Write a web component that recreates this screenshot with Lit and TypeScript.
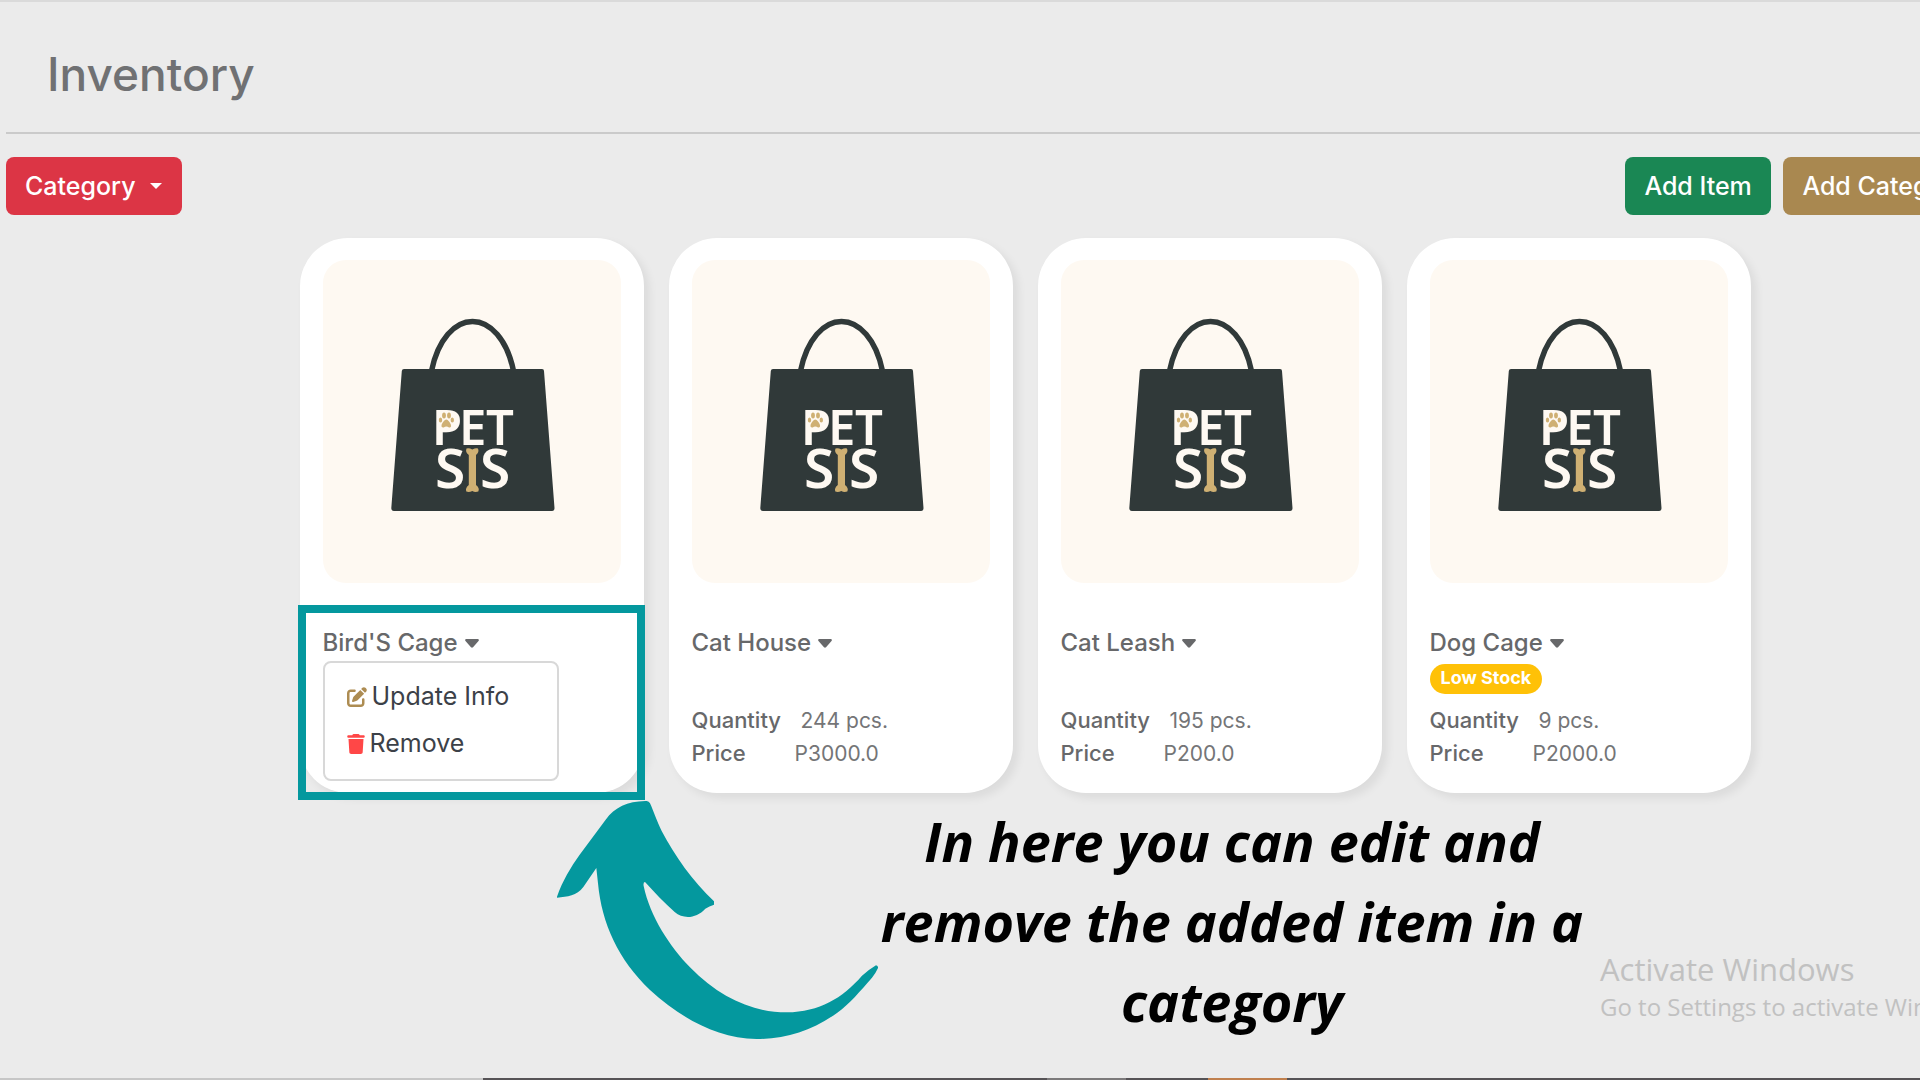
import { LitElement, html, css, nothing } from "lit";
import { customElement, property } from "lit/decorators.js";

interface Item {
  name: string;
  quantity?: string;
  price?: string;
  low?: boolean;
  open?: boolean;
}

const ITEMS: Item[] = [
  { name: "Bird'S Cage", open: true },
  { name: "Cat House", quantity: "244 pcs.", price: "P3000.0" },
  { name: "Cat Leash", quantity: "195 pcs.", price: "P200.0" },
  { name: "Dog Cage", quantity: "9 pcs.", price: "P2000.0", low: true },
];

const bag = html`
  <svg class="bag" viewBox="0 0 298 323" role="img" aria-label="Pet SIS">
    <path d="M108.500 111C115 79 132 61.500 149.500 61.500S184 79 190.500 111" fill="none" stroke="#303939" stroke-width="5.500" />
    <path d="M81 109H219Q221 109 221 111L231.500 248Q231.500 251 229 251H71Q68.300 251 68.300 248L78.800 111Q79 109 81 109Z" fill="#303939" />
    <path d="M116 153H127Q133 154 133 161T127 169H116Z" fill="#fef9f2" />
    <g fill="#fef9f2" class="brand">
      <text x="109" y="185" font-size="49">P</text>
      <text x="136" y="185" font-size="49">E</text>
      <text x="163" y="185" font-size="49">T</text>
      <text x="112" y="228" font-size="55">S</text>
      <text x="157" y="228" font-size="55">S</text>
    </g>
    <g fill="#cfb073">
      <path d="M143.500 188.500Q146 187.500 149.300 189.500Q153 187.500 155 188.500Q156.500 192 153 195V225Q157 228 155.300 231.500Q152 232.500 149.300 231Q146 232.500 143.300 231.500Q142 228 145.800 225V195Q142 192 143.500 188.500Z" />
      <ellipse cx="121" cy="155.500" rx="1.900" ry="3" />
      <ellipse cx="126" cy="155.500" rx="1.900" ry="3" />
      <ellipse cx="117.500" cy="160" rx="1.700" ry="2.500" />
      <ellipse cx="129.300" cy="160" rx="1.700" ry="2.500" />
      <path d="M123.300 159.500Q126 160 128 165Q128.500 168 126 167.500Q123.300 165.500 120.700 167.500Q118 168 118.500 165Q120.500 160 123.300 159.500Z" />
    </g>
  </svg>
`;

@customElement("item-card")
class ItemCard extends LitElement {
  @property({ attribute: false }) item!: Item;

  static styles = css`
    :host {
      display: block;
      position: relative;
      box-sizing: border-box;
      padding: 22px 23px 23px;
      border-radius: 48px;
      background: #fff;
      box-shadow: 5px 5px 10px rgba(0, 0, 0, 0.07);
    }
    .picture {
      display: block;
      border-radius: 23px;
      background: #fef9f2;
      overflow: hidden;
    }
    .bag {
      display: block;
      width: 100%;
    }
    .brand {
      font-family: "Noto Sans", sans-serif;
      font-weight: 600;
    }
    .name {
      display: flex;
      align-items: center;
      gap: 7px;
      margin: 42px 0 0;
      padding: 0;
      border: 0;
      background: none;
      color: #67686a;
      font: 500 24px/36px Inter, sans-serif;
    }
    .caret {
      width: 14px;
      height: 9px;
    }
    .status {
      height: 43px;
      padding-top: 3px;
      box-sizing: border-box;
    }
    .badge {
      display: inline-block;
      height: 30px;
      padding: 0 11px;
      border-radius: 15px;
      background: #ffc107;
      color: #fff;
      font: 700 18px/28px Inter, sans-serif;
    }
    .facts {
      margin: 0;
      font: 400 21px/33px Inter, sans-serif;
      color: #747577;
    }
    .fact {
      display: flex;
    }
    dt {
      width: 103px;
      color: #67686a;
      font-size: 22px;
      font-weight: 500;
    }
    dd {
      margin: 0;
    }
    .wide dt {
      width: 109px;
    }
    .menu {
      position: absolute;
      left: 23px;
      top: 423px;
      box-sizing: border-box;
      width: 236px;
      margin: 0;
      padding: 10px 22px 12px;
      border: 2px solid #d8d8d8;
      border-radius: 8px;
      background: #fff;
      list-style: none;
    }
    .action {
      display: flex;
      align-items: center;
      gap: 5px;
      padding: 0;
      border: 0;
      background: none;
      color: #3c4148;
      white-space: nowrap;
      font: 400 25px/47px Inter, sans-serif;
    }
    .edit {
      width: 20px;
      height: 20px;
    }
    .trash {
      width: 18px;
      height: 20px;
    }
    .highlight {
      position: absolute;
      left: -2px;
      top: 367px;
      box-sizing: border-box;
      width: 347px;
      height: 195px;
      border: 8px solid #04989e;
      pointer-events: none;
    }
  `;

  render() {
    const it = this.item;
    return html`
      <div class="picture">${bag}</div>
      <button class="name" aria-expanded=${it.open ? "true" : "false"}>
        ${it.name}
        <svg class="caret" viewBox="0 0 14 9"><path d="M1 0H13Q14.500 .5 13.500 2L8 8.300Q7 9 6 8.300L.5 2Q-.5 .5 1 0Z" fill="#67686a" /></svg>
      </button>
      <div class="status">${it.low ? html`<span class="badge">Low Stock</span>` : nothing}</div>
      ${it.quantity
        ? html`<dl class="facts">
            <div class="fact wide"><dt>Quantity</dt><dd>${it.quantity}</dd></div>
            <div class="fact"><dt>Price</dt><dd>${it.price}</dd></div>
          </dl>`
        : nothing}
      ${it.open
        ? html`<ul class="menu">
              <li>
                <button class="action">
                  <svg class="edit" viewBox="0 0 512 512" fill="#ad8c52"><path d="M471.600 21.700c-21.900-21.900-57.300-21.900-79.200 0L362.300 51.700l97.900 97.900 30.100-30.100c21.900-21.900 21.900-57.300 0-79.200L471.600 21.700zm-299.200 220c-6.100 6.100-10.800 13.600-13.500 21.900l-29.600 88.800c-2.900 8.600-.6 18.100 5.800 24.600s15.900 8.700 24.600 5.800l88.800-29.600c8.200-2.700 15.700-7.400 21.900-13.500L437.700 172.300 339.700 74.300 172.400 241.700zM96 64C43 64 0 107 0 160V416c0 53 43 96 96 96H352c53 0 96-43 96-96V320c0-17.700-14.300-32-32-32s-32 14.300-32 32v96c0 17.700-14.300 32-32 32H96c-17.700 0-32-14.300-32-32V160c0-17.700 14.300-32 32-32h96c17.700 0 32-14.300 32-32s-14.300-32-32-32H96z" /></svg>
                  Update Info
                </button>
              </li>
              <li>
                <button class="action">
                  <svg class="trash" viewBox="0 0 448 512" fill="#ff4747"><path d="M135.200 17.700L128 32H32C14.300 32 0 46.300 0 64S14.300 96 32 96H416c17.700 0 32-14.300 32-32s-14.300-32-32-32H320l-7.200-14.300C307.400 6.800 296.300 0 284.200 0H163.800c-12.100 0-23.200 6.800-28.600 17.700zM416 128H32L53.200 467c1.600 25.300 22.600 45 47.900 45H346.900c25.300 0 46.300-19.700 47.900-45L416 128z" /></svg>
                  Remove
                </button>
              </li>
            </ul>
            <div class="highlight"></div>`
        : nothing}
    `;
  }
}

@customElement("app-root")
class AppRoot extends LitElement {
  static styles = css`
    :host {
      display: flex;
      flex-direction: column;
      position: relative;
      box-sizing: border-box;
      min-height: 100vh;
      overflow: hidden;
      border-top: 2px solid #dadada;
      background: #ebebeb;
      font-family: Inter, sans-serif;
    }
    .page {
      flex: 1;
      margin: 0 -124px 0 6px;
    }
    .title {
      margin: 0;
      padding: 42px 41px 28px;
      border-bottom: 2px solid #cacaca;
      color: #707173;
      font: 500 46px/60px Inter, sans-serif;
    }
    .toolbar {
      display: flex;
      justify-content: space-between;
      padding: 23px 57px 23px 0;
    }
    .group {
      display: flex;
      gap: 12px;
    }
    .btn {
      display: flex;
      align-items: center;
      gap: 14px;
      box-sizing: border-box;
      height: 58px;
      padding: 0 19px;
      border: 0;
      border-radius: 8px;
      color: #fff;
      white-space: nowrap;
      font: 500 25px/34px Inter, sans-serif;
    }
    .red {
      min-width: 176px;
      background: #dc3545;
    }
    .green {
      min-width: 146px;
      background: #1a8754;
    }
    .tan {
      min-width: 200px;
      background: #a98850;
    }
    .arrow-down {
      width: 12px;
      height: 6px;
    }
    .cards {
      display: grid;
      grid-template-columns: repeat(4, 344px);
      justify-content: center;
      gap: 25px;
    }
    .note {
      display: flex;
      align-items: flex-start;
      margin: 8px 0 0 551px;
    }
    .swoosh {
      flex: none;
      width: 322px;
      height: 240px;
    }
    .hint {
      flex: 0 0 706px;
      margin: 0;
      color: #000;
      text-align: center;
      font: italic 700 54px/80px "Open Sans", sans-serif;
    }
    .watermark {
      position: absolute;
      left: 1600px;
      top: 947px;
      color: #c1c1c1;
      white-space: nowrap;
      font: 400 24px/34px "Open Sans", sans-serif;
    }
    .headline {
      font-size: 31px;
      line-height: 41px;
    }
    .strip {
      display: flex;
      height: 2px;
      background: #565356;
    }
    .s-light {
      width: 483px;
      background: #c6c6c6;
    }
    .s-gray {
      width: 79px;
      margin-left: 564px;
      background: #7c7a7b;
    }
    .s-orange {
      width: 79px;
      margin-left: 82px;
      background: #c0804e;
    }
  `;

  render() {
    return html`
      <main class="page">
        <h1 class="title">Inventory</h1>
        <div class="toolbar">
          <button class="btn red">
            Category
            <svg class="arrow-down" viewBox="0 0 12 6"><path d="M0 0H12L6 6Z" fill="#fff" /></svg>
          </button>
          <div class="group">
            <button class="btn green">Add Item</button>
            <button class="btn tan">Add Category</button>
          </div>
        </div>
        <section class="cards">${ITEMS.map((it) => html`<item-card .item=${it}></item-card>`)}</section>
        <div class="note">
          <svg class="swoosh" viewBox="51 63 966 720" fill="#04989e" aria-hidden="true">
            <path d="M50 353C66 305 92 262 119 224L197 119C224 82 262 64 316 63Q326 62 330 70C340 92 350 122 365 153C404 227 458 304 522 364V374Q508 378 496 386C468 416 430 418 404 396C372 368 344 338 315 306Q309 306 311 318C330 410 390 500 450 562C540 655 640 697 740 697C840 695 906 655 966 587Q982 572 1008 556Q1015 557 1014 564Q1008 578 996 593C960 634 930 670 892 698C820 750 740 777 650 777C530 776 420 712 330 630C235 540 185 430 174 310L169 264L130 321C110 348 82 350 50 353Z" />
          </svg>
          <p class="hint">In here you can edit and remove the added item in a category</p>
        </div>
      </main>
      <div class="watermark">
        <div class="headline">Activate Windows</div>
        <div>Go to Settings to activate Windows.</div>
      </div>
      <div class="strip"><i class="s-light"></i><i class="s-gray"></i><i class="s-orange"></i></div>
    `;
  }
}
